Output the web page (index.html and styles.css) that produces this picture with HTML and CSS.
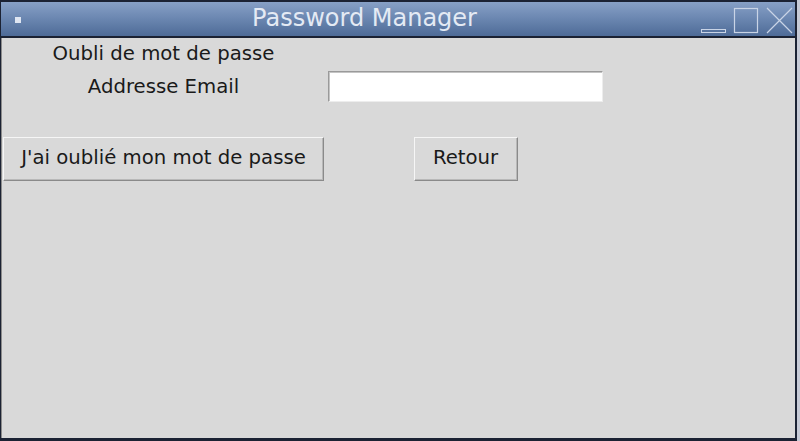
FILE: index.html
```html
<!DOCTYPE html>
<html lang="fr">
<head>
<meta charset="utf-8">
<title>Password Manager</title>
<link rel="stylesheet" href="styles.css">
</head>
<body>
<div class="window">
  <div class="titlebar">
    <span class="menu-icon"></span>
    <span class="title">Password Manager</span>
    <div class="controls">
      <svg class="ctl ctl-min" width="27" height="30" viewBox="0 0 27 30"><rect x="1.5" y="24.5" width="24" height="3" fill="none" stroke="#c9d4e6" stroke-width="1"/></svg>
      <svg class="ctl ctl-max" width="27" height="30" viewBox="0 0 27 30"><rect x="1.5" y="3.5" width="23" height="24" fill="none" stroke="#c9d4e6" stroke-width="1.2"/></svg>
      <svg class="ctl ctl-close" width="29" height="30" viewBox="0 0 29 30"><path d="M2 3 L27 28 M27 3 L2 28" stroke="#c9d4e6" stroke-width="1.2" fill="none"/></svg>
    </div>
  </div>
  <div class="client">
    <div class="form">
      <div class="cell heading">Oubli de mot de passe</div>
      <div class="cell empty"></div>
      <div class="cell label">Addresse Email</div>
      <div class="cell field"><input class="entry" type="text"></div>
      <div class="cell spacer"></div>
      <div class="cell spacer"></div>
      <div class="cell btn-cell btn-cell-left"><button class="btn btn-wide">J'ai oublié mon mot de passe</button></div>
      <div class="cell btn-cell"><button class="btn btn-back">Retour</button></div>
    </div>
  </div>
</div>
</body>
</html>
```

FILE: styles.css
```css
* { box-sizing: border-box; }
html, body {
  margin: 0;
  padding: 0;
  background: #c6cad6;
  font-family: "DejaVu Sans", "Liberation Sans", sans-serif;
}
.window {
  width: 797px;
  height: 441px;
  border-top: 2px solid #1b2233;
  border-left: 1px solid #1b2233;
  border-right: 2px solid #1b2233;
  border-bottom: 3px solid #1b2233;
  display: flex;
  flex-direction: column;
  background: #d9d9d9;
}
.titlebar {
  height: 36px;
  flex: none;
  border-bottom: 2px solid #1b2233;
  background: linear-gradient(to bottom, #87a0c6 0%, #6a86b0 50%, #4e6b97 100%);
  display: flex;
  align-items: center;
  position: relative;
}
.menu-icon {
  width: 6px;
  height: 6px;
  background: #dfe6f2;
  margin-left: 14px;
  margin-top: 1px;
  flex: none;
}
.title {
  flex: 1;
  text-align: center;
  color: #e4eaf4;
  font-size: 24px;
  line-height: 34px;
  padding-left: 8px;
  margin-top: -2px;
}
.controls {
  display: flex;
  align-items: flex-start;
  height: 34px;
  padding-top: 3px;
  margin-right: 1px;
  flex: none;
}
.ctl { display: block; }
.ctl-min { margin-right: 6px; }
.ctl-max { margin-right: 5px; }
.client {
  flex: 1;
  border-left: 1px solid #8c8c8c;
}
.form {
  display: grid;
  grid-template-columns: 323px 281px;
  grid-template-rows: 33px 31px 35px 44px;
  font-size: 19.7px;
  color: #1a1a1a;
}
.cell {
  display: flex;
  justify-content: center;
}
.heading {
  align-items: flex-start;
  padding-top: 5px;
  line-height: 22px;
}
.label {
  align-items: center;
  line-height: 22px;
}
.field {
  align-items: stretch;
  padding: 0 3px;
}
.entry {
  width: 275px;
  height: 31px;
  margin: 0;
  border: 1px solid;
  border-color: #9a9a9a #ededed #ededed #9a9a9a;
  box-shadow: inset 1px 1px 0 #c4c4c4;
  background: #ffffff;
  outline: none;
  padding: 0 4px;
  font: inherit;
}
.btn-cell {
  align-items: stretch;
}
.btn-cell-left {
  justify-content: flex-start;
  padding-left: 1px;
}
.btn {
  margin: 0;
  height: 44px;
  background: #d9d9d9;
  border: 1px solid;
  border-color: #f6f6f6 #8a8a8a #8a8a8a #f6f6f6;
  box-shadow: inset -1px -1px 0 #b8b8b8;
  font-family: "DejaVu Sans", "Liberation Sans", sans-serif;
  font-size: 19.7px;
  color: #1a1a1a;
  line-height: 22px;
  padding: 0 0 2px 0;
}
.btn-wide { width: 321px; }
.btn-back { width: 104px; }
```
